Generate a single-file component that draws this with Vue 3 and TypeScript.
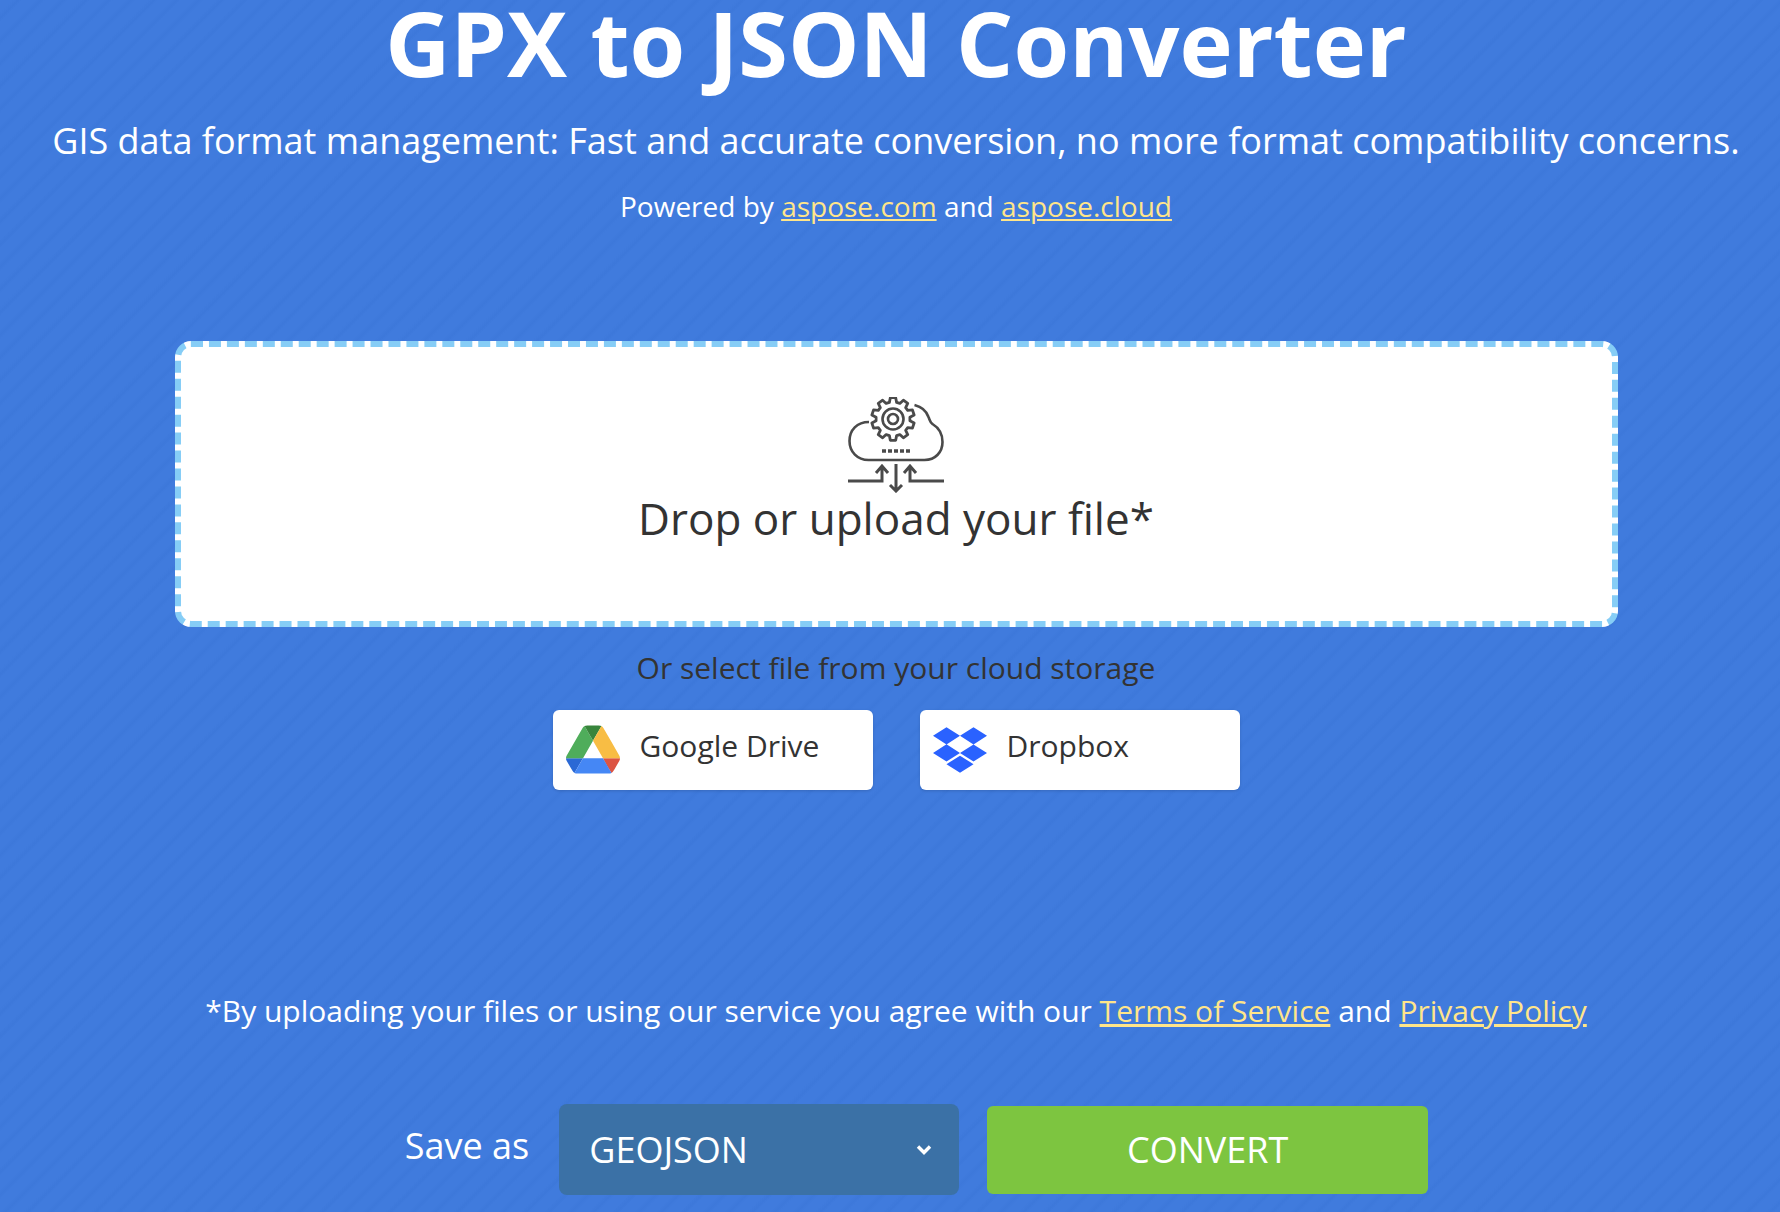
<script setup lang="ts">
import { ref } from 'vue';

const format = ref('GEOJSON');
const formats = ['GEOJSON', 'JSON', 'KML', 'GPX', 'SHP'];

// outline of the gear, one pass round its ten teeth
function gearPath(teeth: number, outer: number, inner: number) {
  const step = (Math.PI * 2) / teeth;
  const pts: string[] = [];
  for (let i = 0; i < teeth; i++) {
    const a = i * step - Math.PI / 2;
    const corners: [number, number][] = [
      [a - step * 0.34, inner],
      [a - step * 0.2, outer],
      [a + step * 0.2, outer],
      [a + step * 0.34, inner],
    ];
    for (const [t, r] of corners) {
      pts.push(`${(r * Math.cos(t)).toFixed(2)} ${(r * Math.sin(t)).toFixed(2)}`);
    }
  }
  return `M${pts.join('L')}Z`;
}

const gear = gearPath(10, 21.5, 17);
</script>

<template>
  <main class="page">
    <h1 class="title">GPX to JSON Converter</h1>
    <p class="subtitle">GIS data format management: Fast and accurate conversion, no more format compatibility concerns.</p>
    <p class="powered">Powered by <a href="#">aspose.com</a> and <a href="#">aspose.cloud</a></p>

    <div class="dropzone">
      <svg class="cloud-icon" width="96" height="96" viewBox="0 0 96 96" fill="none" stroke="#4a4a4a" stroke-width="2.6">
        <path d="M21 25C9 25 1.5 33 1.5 44c0 11 8 19 19 19h56c11 0 18-8 18-18 0-9-5-15-10-18-2-1-2-2-4-7-2-6-6-10-14-12" />
        <g transform="translate(45 22)" stroke-linejoin="round">
          <path :d="gear" stroke-width="2.8" />
          <circle r="10.5" />
          <circle r="5" />
        </g>
        <path d="M34 54h4M40 54h4M46 54h4M52 54h4M58 54h4" stroke-width="3.4" />
        <path d="M0 84h34V70M28 76l6-7 6 7M96 84H62V70M56 76l6-7 6 7M48 67v27M42 88l6 6 6-6" stroke-width="3" />
      </svg>
      <div class="drop-label">Drop or upload your file*</div>
    </div>

    <p class="cloud-hint">Or select file from your cloud storage</p>
    <div class="cloud-buttons">
      <button class="cloud-btn">
        <svg class="drive-icon" width="54" height="49" viewBox="0 0 87.3 78">
          <path d="m6.6 66.85 3.85 6.65c.8 1.4 1.95 2.5 3.3 3.3l13.75-23.8h-27.5c0 1.55.4 3.1 1.2 4.5z" fill="#2b69d5" />
          <path d="m43.65 25-13.75-23.8c-1.35.8-2.5 1.9-3.3 3.3l-25.4 44a9.06 9.06 0 0 0 -1.2 4.5h27.5z" fill="#4fad5b" />
          <path d="m73.55 76.8c1.35-.8 2.5-1.9 3.3-3.3l1.6-2.75 7.65-13.25c.8-1.4 1.2-2.95 1.2-4.5h-27.502l5.852 11.5z" fill="#dc5442" />
          <path d="m43.65 25 13.75-23.8c-1.35-.8-2.9-1.2-4.5-1.2h-18.5c-1.6 0-3.15.45-4.5 1.2z" fill="#38853c" />
          <path d="m59.8 53h-32.3l-13.75 23.8c1.35.8 2.9 1.2 4.5 1.2h50.8c1.6 0 3.15-.45 4.5-1.2z" fill="#4587f5" />
          <path d="m73.4 26.5-12.7-22c-.8-1.4-1.95-2.5-3.3-3.3l-13.75 23.8 16.15 28h27.45c0-1.55-.4-3.1-1.2-4.5z" fill="#f8bd44" />
        </svg>
        <span>Google Drive</span>
      </button>
      <button class="cloud-btn">
        <svg class="dropbox-icon" width="54" height="46" viewBox="0 2 24 20.2">
          <path d="M6 2 0 5.8l6 3.8 6-3.8zM18 2l-6 3.8 6 3.8 6-3.8zM0 13.4l6 3.8 6-3.8-6-3.8zM18 9.6l-6 3.8 6 3.8 6-3.8zM6 18.4l6 3.8 6-3.8-6-3.8z" fill="#2a62ff" />
        </svg>
        <span>Dropbox</span>
      </button>
    </div>

    <p class="terms">*By uploading your files or using our service you agree with our <a href="#">Terms of Service</a> and <a href="#">Privacy Policy</a></p>

    <div class="save-row">
      <label class="save-label" for="fmt">Save as</label>
      <div class="select-wrap">
        <select id="fmt" v-model="format" class="format-select">
          <option v-for="f in formats" :key="f" :value="f">{{ f }}</option>
        </select>
        <svg class="chevron" width="16" height="12" viewBox="0 0 16 12" fill="none" stroke="#fff" stroke-width="3.4">
          <path d="M2 2.5l6 6 6-6" />
        </svg>
      </div>
      <button class="convert">CONVERT</button>
    </div>
  </main>
</template>

<style>
html,
body {
  margin: 0;
  overflow: hidden;
}
</style>

<style scoped>
.page {
  box-sizing: border-box;
  height: 1212px;
  padding-left: 12px;
  overflow: hidden;
  display: flex;
  flex-direction: column;
  align-items: center;
  font-family: 'Open Sans', sans-serif;
  color: #fff;
  background: repeating-linear-gradient(135deg, #407bdd 0 9px, #3d78da 13px, #407bdd 16px);
}

.title {
  margin: 0;
  font-size: 90px;
  line-height: 84px;
  font-weight: 700;
  white-space: nowrap;
}

.subtitle {
  margin: 32px 0 0;
  font-size: 36px;
  line-height: 50px;
  white-space: nowrap;
}

.powered {
  margin: 20px 0 0;
  font-size: 28px;
  line-height: 40px;
}

a {
  color: #ffe58a;
  text-decoration: underline;
}

.dropzone {
  box-sizing: border-box;
  width: 1443px;
  height: 286px;
  margin-top: 115px;
  border: 6px dashed #86cdf6;
  border-radius: 16px;
  background: #fff;
  display: flex;
  flex-direction: column;
  align-items: center;
  padding-top: 50px;
}

.cloud-icon {
  display: block;
}

.drop-label {
  margin-top: -5px;
  font-size: 44px;
  line-height: 60px;
  color: #333;
}

.cloud-hint {
  margin: 20px 0 0;
  font-size: 30px;
  line-height: 42px;
  color: #333;
}

.cloud-buttons {
  display: flex;
  gap: 47px;
  margin-top: 21px;
}

.cloud-btn {
  display: flex;
  align-items: center;
  gap: 20px;
  width: 320px;
  height: 80px;
  padding: 0 13px;
  border: none;
  border-radius: 6px;
  background: #fff;
  color: #333;
  font-family: inherit;
  font-size: 30px;
  box-shadow: 0 1px 3px rgba(0, 0, 0, 0.15);
}

.cloud-btn span {
  padding-bottom: 10px;
}

.drive-icon {
  margin-bottom: 2px;
}

.terms {
  margin: 200px 0 0;
  font-size: 30px;
  line-height: 42px;
  white-space: nowrap;
}

.save-row {
  display: flex;
  align-items: center;
  gap: 28px;
  margin-top: 72px;
  margin-left: 41px;
}

.save-label {
  font-size: 36px;
  margin-bottom: 8px;
  margin-right: 2px;
}

.select-wrap {
  position: relative;
}

.format-select {
  display: block;
  width: 400px;
  height: 91px;
  padding: 0 30px;
  border: none;
  border-radius: 8px;
  background: #3b71a6;
  color: #fff;
  font-family: inherit;
  font-size: 36px;
  appearance: none;
}

.chevron {
  position: absolute;
  right: 27px;
  top: 40px;
}

.convert {
  width: 441px;
  height: 88px;
  border: none;
  border-radius: 6px;
  background: #7dc540;
  color: #fff;
  font-family: inherit;
  font-size: 36px;
}
</style>
